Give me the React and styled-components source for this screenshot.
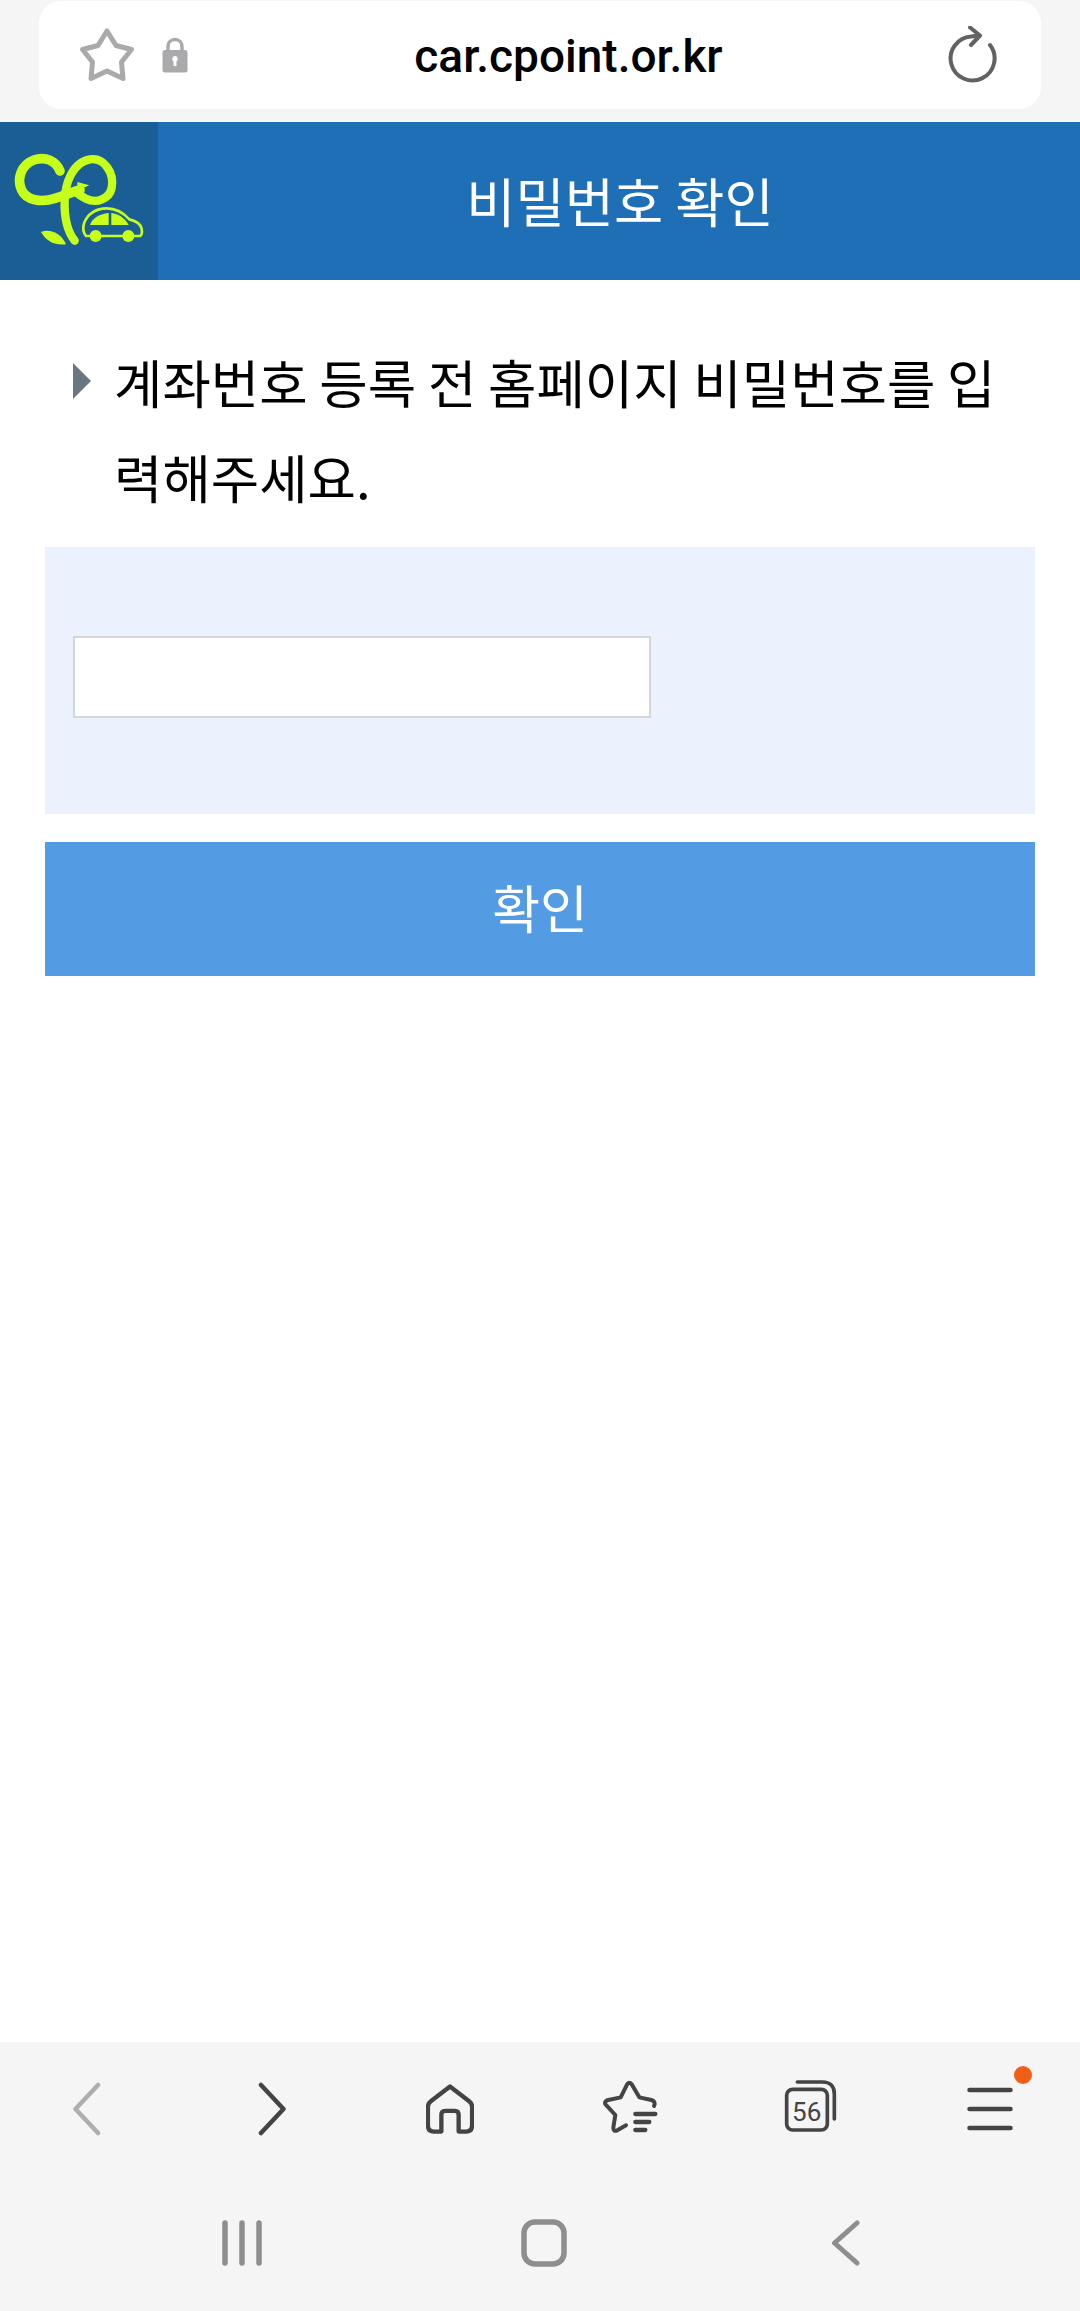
import styled, { createGlobalStyle } from "styled-components";

const GlobalStyle = createGlobalStyle`
  html, body {
    margin: 0;
    padding: 0;
    background: #fff;
  }
  * {
    box-sizing: border-box;
  }
`;

const KR = `"Noto Sans CJK KR", "Noto Sans", sans-serif`;

const Page = styled.div`
  width: 1080px;
  height: 2311px;
  display: flex;
  flex-direction: column;
  background: #fff;
  font-family: ${KR};
  overflow: hidden;
`;

const AddressBar = styled.div`
  height: 120px;
  flex: none;
  padding: 1px 39px 11px;
  background: #f5f5f5;
`;

const UrlBox = styled.div`
  height: 108px;
  background: #fff;
  border-radius: 22px;
  display: grid;
  grid-template-columns: 150px 1fr 150px;
  align-items: center;
`;

const UrlIcons = styled.div`
  display: flex;
  align-items: center;
  padding-left: 39px;
  gap: 26px;
`;

const UrlText = styled.div`
  font-family: Roboto, sans-serif;
  font-weight: 500;
  font-size: 46px;
  color: #000;
  text-align: center;
  padding: 2px 0 0 57px;
`;

const ReloadSlot = styled.div`
  display: flex;
  justify-content: flex-end;
  padding-right: 43px;
`;

const Spacer = styled.div`
  height: 2px;
  flex: none;
  background: #f4f8f8;
`;

const Header = styled.header`
  height: 158px;
  flex: none;
  display: flex;
  background: #1f6fb6;
`;

const LogoBox = styled.div`
  width: 158px;
  flex: none;
  background: #1b5e96;
  display: flex;
`;

const Title = styled.h1`
  flex: 1;
  margin: 0;
  padding: 0 0 3px 2px;
  display: flex;
  align-items: center;
  justify-content: center;
  color: #fff;
  font-size: 53.5px;
  font-weight: 400;
`;

const Main = styled.main`
  flex: 1;
  padding: 54px 45px 0;
`;

const Notice = styled.div`
  display: flex;
  align-items: flex-start;
  padding: 0 28px;
  height: 213px;
`;

const Marker = styled.span`
  flex: none;
  width: 0;
  height: 0;
  margin-top: 29px;
  margin-right: 23px;
  border-left: 18px solid #6b7780;
  border-top: 18px solid transparent;
  border-bottom: 18px solid transparent;
`;

const NoticeText = styled.p`
  margin: 0;
  width: 900px;
  font-size: 52.6px;
  line-height: 95px;
  color: #000;
  word-break: break-all;
`;

const FormPanel = styled.div`
  height: 267px;
  background: #ebf2fe;
  padding: 89px 28px 0;
`;

const PasswordInput = styled.input`
  display: block;
  width: 578px;
  height: 82px;
  background: #fff;
  border: 2px solid #d4d6da;
  outline: none;
`;

const SubmitButton = styled.button`
  display: block;
  width: 100%;
  height: 134px;
  margin-top: 28px;
  padding: 0 0 6px;
  border: 0;
  background: #539be3;
  color: #fff;
  font-family: ${KR};
  font-size: 52px;
  font-weight: 400;
`;

const BrowserBar = styled.nav`
  flex: none;
  height: 143px;
  background: #f5f5f5;
  display: grid;
  grid-template-columns: repeat(6, 180px);
  justify-items: center;
  align-items: center;
  padding-bottom: 10px;
`;

const NavItem = styled.div`
  position: relative;
  display: flex;
  transform: translateX(${(props) => props.$nudge || 0}px);
`;

const Badge = styled.span`
  position: absolute;
  top: -21px;
  right: -19px;
  width: 18px;
  height: 18px;
  border-radius: 50%;
  background: #f05f14;
`;

const GestureBar = styled.div`
  flex: none;
  height: 126px;
  background: #f5f5f5;
  display: flex;
  justify-content: center;
  align-items: center;
  padding: 0 0 10px 7px;
`;

const GestureKey = styled.div`
  width: 302px;
  display: flex;
  justify-content: center;
`;

const Logo = () => (
  <svg width="158" height="158" viewBox="0 66 474 474">
    <path
      d="M180 213C168 182 135 168 102 180C64 194 50 235 64 268C78 302 125 308 165 295C195 285 215 276 240 270"
      fill="none"
      stroke="#c6ff1a"
      strokeWidth="29"
      strokeLinecap="round"
    />
    <path
      d="M224 422C205 398 192 360 194 300C196 250 218 186 270 178C312 172 344 218 335 264C328 296 290 312 258 296C246 290 236 284 228 276"
      fill="none"
      stroke="#c6ff1a"
      strokeWidth="25"
      strokeLinecap="round"
    />
    <path d="M232 246L268 256L232 272Z" fill="#c6ff1a" />
    <path d="M123 396C150 385 184 400 198 433C165 436 140 426 123 396Z" fill="#c6ff1a" />
    <path
      d="M268 408H258C250 398 248 384 252 370C262 342 288 325 320 325C350 325 372 340 388 358C404 362 422 370 425 386C427 398 424 406 420 408H402M370 408H302"
      fill="none"
      stroke="#c6ff1a"
      strokeWidth="8"
      strokeLinecap="round"
    />
    <circle cx="287" cy="408" r="18" fill="#c6ff1a" />
    <circle cx="385" cy="408" r="18" fill="#c6ff1a" />
    <path d="M270 375C276 356 296 342 326 339V375Z" fill="#c6ff1a" />
    <path d="M334 339C352 341 374 352 386 375H334Z" fill="#c6ff1a" />
  </svg>
);

const StarIcon = () => (
  <svg width="58" height="56" viewBox="78 28 58 56">
    <path
      d="M107 32L116 46.500L131.500 50.500L121.500 63L123 79.500L107 72L91 79.500L92.500 63L82.500 50.500L98 46.500Z"
      fill="none"
      stroke="#aaaaac"
      strokeWidth="5"
      strokeLinejoin="round"
    />
  </svg>
);

const LockIcon = () => (
  <svg width="26" height="36" viewBox="0 0 26 36">
    <path d="M6 16V9.500C6 5.500 9 2.500 13 2.500S20 5.500 20 9.500V16" fill="none" stroke="#aaaaac" strokeWidth="3.500" />
    <path
      fillRule="evenodd"
      d="M3 13H23A2.500 2.500 0 0 1 25.500 15.500V33A2.500 2.500 0 0 1 23 35.500H3A2.500 2.500 0 0 1 .5 33V15.500A2.500 2.500 0 0 1 3 13ZM13 19A3 3 0 0 0 11.500 24.500V29H14.500V24.500A3 3 0 0 0 13 19Z"
      fill="#aaaaac"
    />
  </svg>
);

const ReloadIcon = () => (
  <svg width="50" height="58" viewBox="0 0 50 58">
    <path
      d="M42 19A22 22 0 1 1 23 10.500L31 9.500"
      fill="none"
      stroke="#626265"
      strokeWidth="4"
      strokeLinecap="round"
    />
    <path d="M22 1.500L32 9.500L23 19" fill="none" stroke="#626265" strokeWidth="4" strokeLinecap="round" strokeLinejoin="round" />
  </svg>
);

const Chevron = ({ dir, color, size = 54, width = 4.5 }) => (
  <svg width="30" height={size} viewBox={`0 0 30 ${size}`}>
    <path
      d={
        dir === "left"
          ? `M26 3L3.500 ${size / 2}L26 ${size - 3}`
          : `M4 3L26.500 ${size / 2}L4 ${size - 3}`
      }
      fill="none"
      stroke={color}
      strokeWidth={width}
      strokeLinecap="round"
      strokeLinejoin="round"
    />
  </svg>
);

const HomeIcon = () => (
  <svg width="48" height="50" viewBox="0 0 50 52">
    <path
      d="M25 2.500L45 18C47 19.500 48 21 48 24V43C48 47 46 49.500 42 49.500H34V32C34 29 32.500 28 30 28H20C17.500 28 16 29 16 32V49.500H8C4 49.500 2 47 2 43V24C2 21 3 19.500 5 18Z"
      fill="none"
      stroke="#444"
      strokeWidth="4.500"
      strokeLinejoin="round"
    />
  </svg>
);

const BookmarksIcon = () => (
  <svg width="60" height="57" viewBox="30 36 180 171">
    <path
      d="M192 114C197 104 192 98 184 96L148 88L126 50C121 42 115 42 111 50L92 88L55 96C44 99 42 106 50 113L76 141L70 178C69 188 74 190 82 187L108 172"
      fill="none"
      stroke="#444"
      strokeWidth="12"
      strokeLinecap="round"
      strokeLinejoin="round"
    />
    <path d="M136 138H196M136 162H178M136 186H166" fill="none" stroke="#444" strokeWidth="13" strokeLinecap="round" />
  </svg>
);

const TabsIcon = () => (
  <svg width="60" height="57" viewBox="570 36 180 171">
    <path d="M622 42H698C720 42 733 55 733 77V153" fill="none" stroke="#444" strokeWidth="11" strokeLinecap="round" />
    <rect x="590" y="64" width="122" height="122" rx="18" fill="none" stroke="#444" strokeWidth="11" />
    <text x="650" y="159" textAnchor="middle" fontFamily="Roboto, sans-serif" fontSize="78" fill="#444">
      56
    </text>
  </svg>
);

const MenuIcon = () => (
  <svg width="46" height="44" viewBox="0 0 46 44">
    <path d="M2.500 3H43.500M2.500 22H43.500M2.500 41H43.500" fill="none" stroke="#444" strokeWidth="4.500" strokeLinecap="round" />
  </svg>
);

const RecentsIcon = () => (
  <svg width="42" height="46" viewBox="0 0 42 46">
    <path d="M4 3V43M21 3V43M38 3V43" fill="none" stroke="#8e8e8e" strokeWidth="5.500" strokeLinecap="round" />
  </svg>
);

const HomeKeyIcon = () => (
  <svg width="46" height="48" viewBox="0 0 46 48">
    <rect x="3" y="3" width="40" height="42" rx="11" fill="none" stroke="#8e8e8e" strokeWidth="5.500" />
  </svg>
);

const App = () => {
  return (
    <Page>
      <GlobalStyle />
      <AddressBar>
        <UrlBox>
          <UrlIcons>
            <StarIcon />
            <LockIcon />
          </UrlIcons>
          <UrlText>car.cpoint.or.kr</UrlText>
          <ReloadSlot>
            <ReloadIcon />
          </ReloadSlot>
        </UrlBox>
      </AddressBar>
      <Spacer />
      <Header>
        <LogoBox>
          <Logo />
        </LogoBox>
        <Title>비밀번호 확인</Title>
      </Header>
      <Main>
        <Notice>
          <Marker />
          <NoticeText>계좌번호 등록 전 홈페이지 비밀번호를 입력해주세요.</NoticeText>
        </Notice>
        <FormPanel>
          <PasswordInput type="password" />
        </FormPanel>
        <SubmitButton>확인</SubmitButton>
      </Main>
      <BrowserBar>
        <NavItem $nudge={-3}><Chevron dir="left" color="#aeaeae" /></NavItem>
        <NavItem $nudge={2}><Chevron dir="right" color="#444" /></NavItem>
        <NavItem><HomeIcon /></NavItem>
        <NavItem><BookmarksIcon /></NavItem>
        <NavItem><TabsIcon /></NavItem>
        <NavItem>
          <MenuIcon />
          <Badge />
        </NavItem>
      </BrowserBar>
      <GestureBar>
        <GestureKey><RecentsIcon /></GestureKey>
        <GestureKey><HomeKeyIcon /></GestureKey>
        <GestureKey><Chevron dir="left" color="#8e8e8e" size={46} width={5} /></GestureKey>
      </GestureBar>
    </Page>
  );
};

export default App;
